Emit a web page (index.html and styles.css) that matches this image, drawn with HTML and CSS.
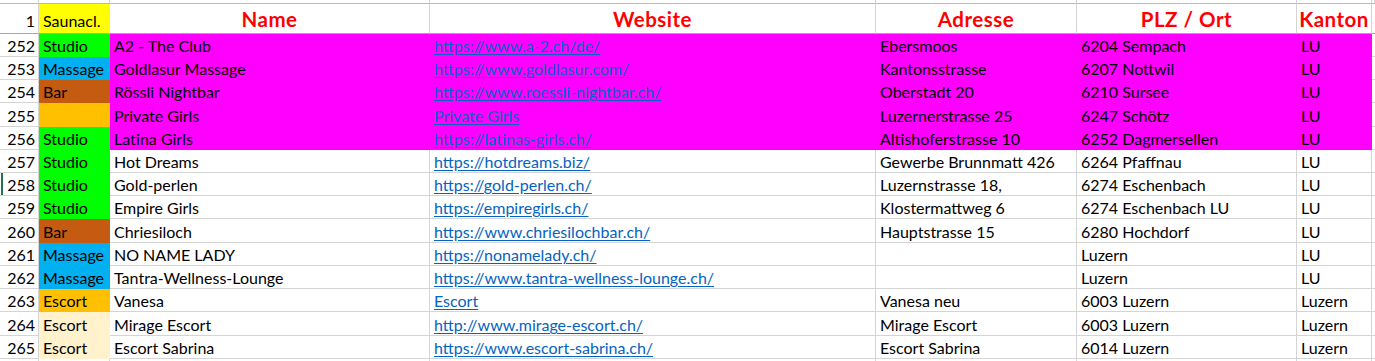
FILE: index.html
```html
<!DOCTYPE html>
<html lang="de">
<head>
<meta charset="utf-8">
<title>Saunaclubs</title>
<link rel="stylesheet" href="styles.css">
</head>
<body>
<div class="sheet">
  <div class="row strip">
    <div class="c"></div><div class="c"></div><div class="c"></div><div class="c"></div><div class="c"></div><div class="c"></div><div class="c"></div><div class="c"></div>
  </div>
  <div class="row head">
    <div class="c num">1</div>
    <div class="c typ yellow">Saunacl.</div>
    <div class="c h">Name</div>
    <div class="c h">Website</div>
    <div class="c h">Adresse</div>
    <div class="c h">PLZ / Ort</div>
    <div class="c h">Kanton</div>
    <div class="c"></div>
  </div>

  <div class="row hl">
    <div class="c num">252</div><div class="c typ green">Studio</div>
    <div class="c f">A2 - The Club</div><div class="c f"><a>https://www.a-2.ch/de/</a></div>
    <div class="c f">Ebersmoos</div><div class="c f">6204 Sempach</div><div class="c f">LU</div><div class="c"></div>
  </div>
  <div class="row hl">
    <div class="c num">253</div><div class="c typ blue">Massage</div>
    <div class="c f">Goldlasur Massage</div><div class="c f"><a>https://www.goldlasur.com/</a></div>
    <div class="c f">Kantonsstrasse</div><div class="c f">6207 Nottwil</div><div class="c f">LU</div><div class="c"></div>
  </div>
  <div class="row hl">
    <div class="c num">254</div><div class="c typ brown">Bar</div>
    <div class="c f">Rössli Nightbar</div><div class="c f"><a>https://www.roessli-nightbar.ch/</a></div>
    <div class="c f">Oberstadt 20</div><div class="c f">6210 Sursee</div><div class="c f">LU</div><div class="c"></div>
  </div>
  <div class="row hl tall">
    <div class="c num">255</div><div class="c typ orange"></div>
    <div class="c f">Private Girls</div><div class="c f"><a>Private Girls</a></div>
    <div class="c f">Luzernerstrasse 25</div><div class="c f">6247 Schötz</div><div class="c f">LU</div><div class="c"></div>
  </div>
  <div class="row hl">
    <div class="c num">256</div><div class="c typ green">Studio</div>
    <div class="c f">Latina Girls</div><div class="c f"><a>https://latinas-girls.ch/</a></div>
    <div class="c f">Altishoferstrasse 10</div><div class="c f">6252 Dagmersellen</div><div class="c f">LU</div><div class="c"></div>
  </div>
  <div class="row">
    <div class="c num">257</div><div class="c typ green">Studio</div>
    <div class="c">Hot Dreams</div><div class="c"><a>https://hotdreams.biz/</a></div>
    <div class="c">Gewerbe Brunnmatt 426</div><div class="c">6264 Pfaffnau</div><div class="c">LU</div><div class="c"></div>
  </div>
  <div class="row">
    <div class="c num active">258</div><div class="c typ green">Studio</div>
    <div class="c">Gold-perlen</div><div class="c"><a>https://gold-perlen.ch/</a></div>
    <div class="c">Luzernstrasse 18,</div><div class="c">6274 Eschenbach</div><div class="c">LU</div><div class="c"></div>
  </div>
  <div class="row">
    <div class="c num">259</div><div class="c typ green">Studio</div>
    <div class="c">Empire Girls</div><div class="c"><a>https://empiregirls.ch/</a></div>
    <div class="c">Klostermattweg 6</div><div class="c">6274 Eschenbach LU</div><div class="c">LU</div><div class="c"></div>
  </div>
  <div class="row tall">
    <div class="c num">260</div><div class="c typ brown">Bar</div>
    <div class="c">Chriesiloch</div><div class="c"><a>https://www.chriesilochbar.ch/</a></div>
    <div class="c">Hauptstrasse 15</div><div class="c">6280 Hochdorf</div><div class="c">LU</div><div class="c"></div>
  </div>
  <div class="row">
    <div class="c num">261</div><div class="c typ blue">Massage</div>
    <div class="c">NO NAME LADY</div><div class="c"><a>https://nonamelady.ch/</a></div>
    <div class="c"></div><div class="c">Luzern</div><div class="c">LU</div><div class="c"></div>
  </div>
  <div class="row">
    <div class="c num">262</div><div class="c typ blue">Massage</div>
    <div class="c">Tantra-Wellness-Lounge</div><div class="c"><a>https://www.tantra-wellness-lounge.ch/</a></div>
    <div class="c"></div><div class="c">Luzern</div><div class="c">LU</div><div class="c"></div>
  </div>
  <div class="row">
    <div class="c num">263</div><div class="c typ orange">Escort</div>
    <div class="c">Vanesa</div><div class="c"><a>Escort</a></div>
    <div class="c">Vanesa neu</div><div class="c">6003 Luzern</div><div class="c">Luzern</div><div class="c"></div>
  </div>
  <div class="row tall">
    <div class="c num">264</div><div class="c typ cream">Escort</div>
    <div class="c">Mirage Escort</div><div class="c"><a>http://www.mirage-escort.ch/</a></div>
    <div class="c">Mirage Escort</div><div class="c">6003 Luzern</div><div class="c">Luzern</div><div class="c"></div>
  </div>
  <div class="row">
    <div class="c num">265</div><div class="c typ cream">Escort</div>
    <div class="c">Escort Sabrina</div><div class="c"><a>https://www.escort-sabrina.ch/</a></div>
    <div class="c">Escort Sabrina</div><div class="c">6014 Luzern</div><div class="c">Luzern</div><div class="c"></div>
  </div>
  <div class="row">
    <div class="c num"></div><div class="c"></div><div class="c"></div><div class="c"></div><div class="c"></div><div class="c"></div><div class="c"></div><div class="c"></div>
  </div>
</div>
</body>
</html>
```
FILE: styles.css
```css
html, body {
  margin: 0;
  padding: 0;
  background: #fff;
}
.sheet {
  width: 1375px;
  height: 361px;
  overflow: hidden;
  font-family: Lato, "Noto Sans", sans-serif;
  font-size: 16px;
  color: #000;
}
.row {
  display: grid;
  grid-template-columns: 39px 71px 320px 446px 201px 220px 75px 3px;
  height: 23px;
}
.row.tall {
  height: 24px;
}
.c {
  box-sizing: border-box;
  border-right: 1px solid #d4d4d4;
  border-bottom: 1px solid #d4d4d4;
  padding: 0 3px 1px 4px;
  display: flex;
  align-items: flex-end;
  white-space: nowrap;
  overflow: visible;
  min-width: 0;
  line-height: 19px;
}
.strip {
  height: 4px;
}
.strip .c {
  border-bottom-color: #b8b8b8;
  padding: 0;
}
.head {
  height: 30px;
}
.head .c {
  border-bottom-color: #a6a6a6;
  padding-bottom: 3px;
}
.h {
  justify-content: center;
  color: #ff0000;
  font-weight: 700;
  font-size: 20.5px;
  letter-spacing: 0.5px;
  padding-left: 0;
  padding-right: 0;
  overflow: visible;
  line-height: 22px;
}
.num {
  justify-content: flex-end;
  padding-right: 3px;
}
.active {
  background: linear-gradient(to right, transparent 1px, #217346 1px, #217346 3px, transparent 3px);
}
.typ {
  border-color: transparent;
}
.yellow { background: #ffff00; }
.green { background: #00ff00; }
.blue { background: #00b0f0; }
.brown { background: #c55a11; }
.orange { background: #ffc000; }
.cream { background: #fff2cc; }
.head .typ {
  border-bottom-color: #a6a6a6;
}
.f {
  background: #ff00ff;
  border-color: transparent;
}
a {
  color: #0563c1;
  text-decoration: underline;
  text-underline-offset: 2px;
}
```
